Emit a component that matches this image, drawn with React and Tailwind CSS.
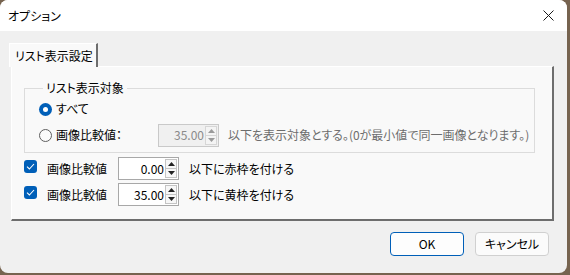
import React from "react";

const font = "font-['Noto_Sans_CJK_JP','Noto_Sans',sans-serif] [font-feature-settings:'palt']";

function SpinBox({ value, disabled }) {
  return (
    <div
      className={`flex h-[23px] w-[61px] border ${
        disabled ? "border-[#c9c9c9] bg-[#f0f0f0] text-[#8a8a8a]" : "border-[#a8a8a8] bg-white text-black"
      }`}
    >
      <div className="flex flex-1 items-center justify-end pr-[1px] text-[12px]">{value}</div>
      <div className="flex w-[13px] flex-col py-[1px] pr-[1px]">
        <div className={`flex flex-1 items-center justify-center border ${disabled ? "border-[#d6d6d6] bg-[#f4f4f4]" : "border-[#c4c4c4] bg-[#f7f7f7]"}`}>
          <svg width="7" height="4" viewBox="0 0 7 4">
            <path d="M0 4 L3.5 0 L7 4 Z" fill={disabled ? "#9a9a9a" : "#222"} />
          </svg>
        </div>
        <div className={`flex flex-1 items-center justify-center border border-t-0 ${disabled ? "border-[#d6d6d6] bg-[#f4f4f4]" : "border-[#c4c4c4] bg-[#f7f7f7]"}`}>
          <svg width="7" height="4" viewBox="0 0 7 4">
            <path d="M0 0 L3.5 4 L7 0 Z" fill={disabled ? "#9a9a9a" : "#222"} />
          </svg>
        </div>
      </div>
    </div>
  );
}

function Radio({ checked }) {
  return checked ? (
    <div className="flex h-[13px] w-[13px] items-center justify-center rounded-full bg-[#005fb8]">
      <div className="h-[5px] w-[5px] rounded-full bg-white" />
    </div>
  ) : (
    <div className="h-[13px] w-[13px] rounded-full border border-[#5f5f5f] bg-[#fbfbfb]" />
  );
}

function Check() {
  return (
    <div className="mb-[4px] flex h-[13px] w-[13px] items-center justify-center rounded-[3px] bg-[#005fb8]">
      <svg width="9" height="7" viewBox="0 0 9 7">
        <path d="M1 3.6 L3.4 6 L8 1" fill="none" stroke="white" strokeWidth="1.1" />
      </svg>
    </div>
  );
}

export default function App() {
  return (
    <div className={`h-[275px] w-[570px] overflow-hidden bg-[#76634f] ${font}`}>
      <div className="flex h-[273px] w-[567px] flex-col overflow-hidden rounded-t-[8px] rounded-b-[8px] bg-[#f0f0f0] text-black">
        {/* title bar */}
        <div className="flex h-[31px] items-center justify-between bg-white pl-[8px] pr-[13px]">
          <span className="text-[12px]">オプション</span>
          <svg width="11" height="11" viewBox="0 0 11 11">
            <path d="M0.5 0.5 L10.5 10.5 M10.5 0.5 L0.5 10.5" stroke="#1a1a1a" strokeWidth="1" />
          </svg>
        </div>

        <div className="flex flex-1 flex-col pl-[9px] pr-[14px] pt-[12px]">
          {/* tab */}
          <div className="relative z-10 -mb-[1px] flex h-[24px] w-[89px] items-center border-l border-t border-r-2 border-l-white border-t-white border-r-[#6d6d6d] bg-[#f9f9f9] pl-[5px] text-[12px]">
            リスト表示設定
          </div>

          {/* tab panel */}
          <div className="ml-[2px] flex h-[155px] w-[543px] flex-col border-l border-t border-r-2 border-b-2 border-l-white border-t-white border-r-[#6d6d6d] border-b-[#6d6d6d] bg-[#f9f9f9] pl-[12px]">
            <fieldset className="mt-[13px] w-[511px] border border-[#dcdcdc] pb-[4px] pl-[14px]">
              <legend className="ml-[4px] px-[3px] text-[12px] leading-[16px]">リスト表示対象</legend>
              <div className="flex h-[26px] items-center">
                <Radio checked />
                <span className="ml-[4px] text-[12px]">すべて</span>
              </div>
              <div className="flex h-[26px] items-center">
                <Radio />
                <span className="ml-[4px] w-[102px] text-[12px]">画像比較値：</span>
                <SpinBox value="35.00" disabled />
                <span className="ml-[9px] text-[12px] text-[#6d6d6d]">
                  以下を表示対象とする。(0が最小値で同一画像となります。)
                </span>
              </div>
            </fieldset>

            <div className="mt-[4px] flex items-center">
              <Check />
              <span className="ml-[10px] w-[71px] text-[12px]">画像比較値</span>
              <SpinBox value="0.00" />
              <span className="ml-[10px] text-[12px]">以下に赤枠を付ける</span>
            </div>
            <div className="mt-[3px] flex items-center">
              <Check />
              <span className="ml-[10px] w-[71px] text-[12px]">画像比較値</span>
              <SpinBox value="35.00" />
              <span className="ml-[10px] text-[12px]">以下に黄枠を付ける</span>
            </div>
          </div>

          {/* buttons */}
          <div className="mt-[11px] flex justify-end gap-[11px] pr-[4px]">
            <button className="flex h-[24px] w-[74px] items-center justify-center rounded-[4px] border border-[#005fb8] bg-[#fdfdfd] text-[12px]">
              OK
            </button>
            <button className="flex h-[24px] w-[74px] items-center justify-center rounded-[4px] border border-[#d0d0d0] bg-[#fbfbfb] text-[12px]">
              キャンセル
            </button>
          </div>
        </div>
      </div>
    </div>
  );
}
